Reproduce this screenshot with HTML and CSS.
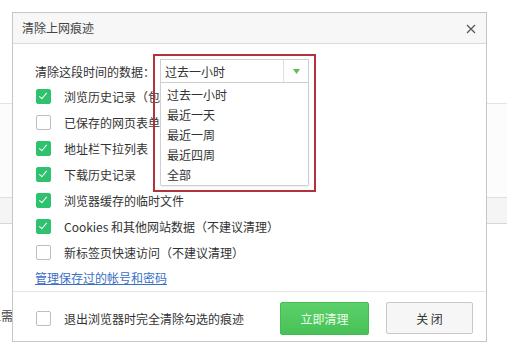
FILE: index.html
```html
<!DOCTYPE html>
<html lang="zh-CN">
<head>
    <meta charset="UTF-8">
    <meta name="viewport" content="width=device-width, initial-scale=1.0">
    <title>清除上网痕迹</title>
    <link rel="stylesheet" href="styles.css">
</head>
<body>
    <!-- settings page behind the modal -->
    <div class="page">
        <div class="page-top"></div>
        <div class="page-mid"></div>
        <div class="page-bar"></div>
        <div class="page-note">上需要时清除</div>
    </div>

    <div class="dialog">
        <div class="dialog-header">
            <span class="dialog-title">清除上网痕迹</span>
            <span class="close">
                <svg width="10" height="10" viewBox="0 0 10 10"><path d="M1 1 L9 9 M9 1 L1 9" stroke="#555" stroke-width="1.2" fill="none"/></svg>
            </span>
        </div>

        <div class="dialog-body">
            <div class="range-row">
                <span class="range-label">清除这段时间的数据：</span>
                <div class="select">
                    <span class="select-value">过去一小时</span>
                    <span class="select-arrow">
                        <svg width="7" height="5" viewBox="0 0 7 5"><path d="M0 0 L7 0 L3.5 5 Z" fill="#5cbf4f"/></svg>
                    </span>
                    <ul class="select-list">
                        <li>过去一小时</li>
                        <li>最近一天</li>
                        <li>最近一周</li>
                        <li>最近四周</li>
                        <li>全部</li>
                    </ul>
                    <div class="highlight"></div>
                </div>
            </div>

            <label class="check-row"><span class="box checked"></span>浏览历史记录（包括页面预加载）</label>
            <label class="check-row"><span class="box"></span>已保存的网页表单数据</label>
            <label class="check-row"><span class="box checked"></span>地址栏下拉列表</label>
            <label class="check-row"><span class="box checked"></span>下载历史记录</label>
            <label class="check-row"><span class="box checked"></span>浏览器缓存的临时文件</label>
            <label class="check-row"><span class="box checked"></span>Cookies 和其他网站数据（不建议清理）</label>
            <label class="check-row"><span class="box"></span>新标签页快速访问（不建议清理）</label>

            <div class="link-row"><a href="#" class="manage-link">管理保存过的帐号和密码</a></div>
        </div>

        <div class="dialog-footer">
            <label class="check-row footer-check"><span class="box"></span>退出浏览器时完全清除勾选的痕迹</label>
            <button class="btn btn-green">立即清理</button>
            <button class="btn btn-plain">关 闭</button>
        </div>
    </div>
</body>
</html>
```

FILE: styles.css
```css
body {
    margin: 0;
    padding: 0;
    background: #fff;
    font-family: "Noto Sans CJK SC", "Noto Sans", sans-serif;
    font-size: 12px;
    color: #333;
    overflow: hidden;
}

.page {
    width: 507px;
    height: 342px;
}
.page-top {
    height: 103px;
    border-bottom: 1px solid #e4e4e4;
}
.page-mid {
    height: 93px;
    background: #fcfcfc;
    border-bottom: 1px solid #dedede;
}
.page-bar {
    height: 25px;
    background: #f5f5f5;
    border-bottom: 1px solid #d8d8d8;
}
.page-note {
    margin-top: 84px;
    margin-left: -11px;
    line-height: 16px;
    color: #444;
}

/* modal */
.dialog {
    position: absolute;
    left: 12px;
    top: 12px;
    width: 473px;
    height: 328px;
    border: 1px solid #c6c6c6;
    background: #fff;
    display: flex;
    flex-direction: column;
}
.dialog-header {
    height: 30px;
    background: #f7f7f7;
    border-bottom: 1px solid #dadada;
    display: flex;
    align-items: center;
    justify-content: space-between;
    padding: 0 10px 0 9px;
}
.dialog-title {
    color: #444;
    line-height: 16px;
}
.close {
    display: flex;
    margin-top: 1px;
}

.dialog-body {
    padding: 15px 0 0 22px;
}
.range-row {
    display: flex;
    align-items: center;
    height: 24px;
}
.range-label {
    width: 125px;
}
.select {
    position: relative;
    width: 147px;
    height: 22px;
    border: 1px solid #cfcfcf;
    display: flex;
    align-items: center;
}
.select-value {
    flex: 1;
    padding-left: 4px;
}
.select-arrow {
    width: 24px;
    height: 22px;
    border-left: 1px solid #e0e0e0;
    display: flex;
    align-items: center;
    justify-content: center;
}
.select-list {
    position: absolute;
    left: -1px;
    top: 23px;
    width: 147px;
    margin: 0;
    padding: 2px 0 0;
    list-style: none;
    background: #fff;
    border: 1px solid #cfcfcf;
    border-top: none;
    border-radius: 0 0 2px 2px;
    box-shadow: 0 1px 2px rgba(0, 0, 0, 0.08);
}
.select-list li {
    height: 20px;
    line-height: 20px;
    padding-left: 6px;
}
.highlight {
    position: absolute;
    left: -8px;
    top: -6px;
    width: 159px;
    height: 134px;
    border: 2px solid #b2333d;
}

.check-row {
    display: flex;
    align-items: center;
    height: 26px;
    padding-left: 1px;
}
.box {
    width: 13px;
    height: 13px;
    border: 1px solid #bdbdbd;
    border-radius: 2px;
    background: #fff;
    margin-right: 13px;
    box-sizing: content-box;
    position: relative;
}
.box.checked {
    border-color: #2ec26e;
    background: #2ec26e;
}
.box.checked::after {
    content: "";
    position: absolute;
    left: 4px;
    top: 1px;
    width: 3px;
    height: 7px;
    border: solid #fff;
    border-width: 0 1.5px 1.5px 0;
    transform: rotate(40deg);
}

.link-row {
    height: 25px;
    display: flex;
    align-items: center;
}
.manage-link {
    color: #3a6fc2;
    text-decoration: underline;
}

.dialog-footer {
    margin-top: auto;
    height: 39px;
    border-top: 1px solid #e6e6e6;
    padding: 10px 13px 0 23px;
    display: flex;
    align-items: flex-start;
}
.footer-check {
    height: 33px;
    flex: 1;
    padding-left: 0;
}
.btn {
    height: 33px;
    border-radius: 2px;
    font-family: inherit;
    font-size: 12px;
    cursor: pointer;
}
.btn-green {
    width: 89px;
    margin-right: 17px;
    border: 1px solid #45bb55;
    background: linear-gradient(#5dd069, #47c257);
    color: #eaffea;
}
.btn-plain {
    width: 87px;
    height: 32px;
    border: 1px solid #c9c9c9;
    background: #f6f6f6;
    color: #333;
}
```
